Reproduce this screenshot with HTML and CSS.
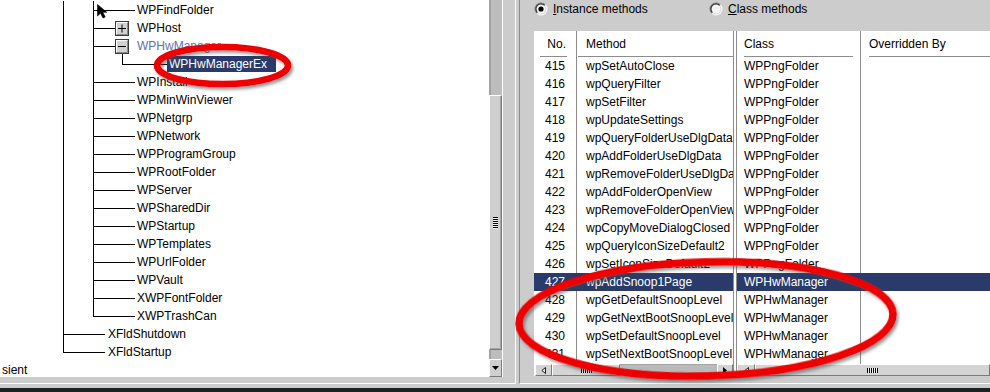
FILE: index.html
```html
<!DOCTYPE html>
<html>
<head>
<meta charset="utf-8">
<link rel="stylesheet" href="styles.css">
</head>
<body>
<div class="screen">
  <div class="window">
    <div class="left">
      <div class="tree-frame">
        <div class="tree">
          <div class="trow r-b">WPFindFolder</div>
          <div class="trow r-bx"><span class="exp"><svg width="14" height="15" viewBox="0 0 14 15"><rect x="0.5" y="0.5" width="13" height="14" fill="#d2d2d2" stroke="#3c3c3c"/><path d="M1.5 13.5V1.5H12.5" stroke="#fff" fill="none"/><path d="M1.5 13.5H12.5V1.5" stroke="#8a8a8a" fill="none"/><path d="M3 7.5H11M7 3.5V11.5" stroke="#000"/></svg></span><span class="tlabel">WPHost</span></div>
          <div class="trow r-bo"><span class="exp"><svg width="14" height="15" viewBox="0 0 14 15"><rect x="0.5" y="0.5" width="13" height="14" fill="#d2d2d2" stroke="#3c3c3c"/><path d="M1.5 13.5V1.5H12.5" stroke="#fff" fill="none"/><path d="M1.5 13.5H12.5V1.5" stroke="#8a8a8a" fill="none"/><path d="M3 7.5H11" stroke="#000"/></svg></span><span class="tlabel hl">WPHwManager</span></div>
          <div class="trow r-c"><span class="tsel">WPHwManagerEx</span></div>
          <div class="trow r-b">WPInstall</div>
          <div class="trow r-b">WPMinWinViewer</div>
          <div class="trow r-b">WPNetgrp</div>
          <div class="trow r-b">WPNetwork</div>
          <div class="trow r-b">WPProgramGroup</div>
          <div class="trow r-b">WPRootFolder</div>
          <div class="trow r-b">WPServer</div>
          <div class="trow r-b">WPSharedDir</div>
          <div class="trow r-b">WPStartup</div>
          <div class="trow r-b">WPTemplates</div>
          <div class="trow r-b">WPUrlFolder</div>
          <div class="trow r-b">WPVault</div>
          <div class="trow r-b">XWPFontFolder</div>
          <div class="trow r-bl">XWPTrashCan</div>
          <div class="trow r-a">XFldShutdown</div>
          <div class="trow r-al">XFldStartup</div>
          <div class="trow r-0">sient</div>
        </div>
        <div class="vscroll">
          <div class="vs-top"></div>
          <div class="vs-thumb"><span class="vs-grip"></span></div>
          <div class="vs-gap"></div>
          <div class="vs-btn"><svg width="7" height="4" viewBox="0 0 7 4"><path d="M0 0H7L3.5 4Z" fill="#000"/></svg></div>
        </div>
      </div>
    </div>

    <div class="right">
      <div class="radios">
        <div class="radio radio-inst">
          <svg width="14" height="14" viewBox="0 0 14 14">
            <defs>
              <linearGradient id="rg1" x1="0" y1="0" x2="1" y2="1"><stop offset="0.48" stop-color="#7a7a7a"/><stop offset="0.52" stop-color="#ffffff"/></linearGradient>
              <linearGradient id="rg2" x1="0" y1="0" x2="1" y2="1"><stop offset="0.48" stop-color="#2c2c2c"/><stop offset="0.52" stop-color="#d8d8d8"/></linearGradient>
            </defs>
            <circle cx="7" cy="7" r="6.5" fill="url(#rg1)"/>
            <circle cx="7" cy="7" r="5.5" fill="url(#rg2)"/>
            <circle cx="7" cy="7" r="4.5" fill="#f4f4f4"/>
            <circle cx="7" cy="7" r="2.6" fill="#000"/>
          </svg>
          <span><u>I</u>nstance methods</span>
        </div>
        <div class="radio">
          <svg width="14" height="14" viewBox="0 0 14 14">
            <circle cx="7" cy="7" r="6.5" fill="url(#rg1)"/>
            <circle cx="7" cy="7" r="5.5" fill="url(#rg2)"/>
            <circle cx="7" cy="7" r="4.5" fill="#f4f4f4"/>
          </svg>
          <span><u>C</u>lass methods</span>
        </div>
      </div>

      <div class="table">
        <div class="split split-l">
          <div class="hd">
            <div class="hc h-no"><span>No.</span></div>
            <div class="hc h-meth"><span>Method</span></div>
          </div>
          <div class="rows">
            <div class="row"><div class="c-no">415</div><div class="c-meth">wpSetAutoClose</div></div>
            <div class="row"><div class="c-no">416</div><div class="c-meth">wpQueryFilter</div></div>
            <div class="row"><div class="c-no">417</div><div class="c-meth">wpSetFilter</div></div>
            <div class="row"><div class="c-no">418</div><div class="c-meth">wpUpdateSettings</div></div>
            <div class="row"><div class="c-no">419</div><div class="c-meth">wpQueryFolderUseDlgData</div></div>
            <div class="row"><div class="c-no">420</div><div class="c-meth">wpAddFolderUseDlgData</div></div>
            <div class="row"><div class="c-no">421</div><div class="c-meth">wpRemoveFolderUseDlgData</div></div>
            <div class="row"><div class="c-no">422</div><div class="c-meth">wpAddFolderOpenView</div></div>
            <div class="row"><div class="c-no">423</div><div class="c-meth">wpRemoveFolderOpenView</div></div>
            <div class="row"><div class="c-no">424</div><div class="c-meth">wpCopyMoveDialogClosed</div></div>
            <div class="row"><div class="c-no">425</div><div class="c-meth">wpQueryIconSizeDefault2</div></div>
            <div class="row"><div class="c-no">426</div><div class="c-meth">wpSetIconSizeDefault2</div></div>
            <div class="row sel"><div class="c-no">427</div><div class="c-meth">wpAddSnoop1Page</div></div>
            <div class="row"><div class="c-no">428</div><div class="c-meth">wpGetDefaultSnoopLevel</div></div>
            <div class="row"><div class="c-no">429</div><div class="c-meth">wpGetNextBootSnoopLevel</div></div>
            <div class="row"><div class="c-no">430</div><div class="c-meth">wpSetDefaultSnoopLevel</div></div>
            <div class="row"><div class="c-no">431</div><div class="c-meth">wpSetNextBootSnoopLevel</div></div>
          </div>
          <div class="hscroll">
            <div class="hs-btn w17"><svg width="5" height="7" viewBox="0 0 5 7"><path d="M4.5 0.5L0.8 3.5L4.5 6.5Z" fill="#e6e6e6" stroke="#222"/></svg></div>
            <div class="hs-thumb"><span class="hs-grip"></span></div>
            <div class="hs-track"></div>
            <div class="hs-btn w16"><svg width="4" height="7" viewBox="0 0 4 7"><path d="M0 0L4 3.5L0 7Z" fill="#000"/></svg></div>
          </div>
        </div>
        <div class="splitbar"></div>
        <div class="split split-r">
          <div class="hd">
            <div class="hc h-cls"><span>Class</span></div>
            <div class="hc h-ovr"><span>Overridden By</span></div>
          </div>
          <div class="rows">
            <div class="row"><div class="c-cls">WPPngFolder</div><div class="c-ovr"></div></div>
            <div class="row"><div class="c-cls">WPPngFolder</div><div class="c-ovr"></div></div>
            <div class="row"><div class="c-cls">WPPngFolder</div><div class="c-ovr"></div></div>
            <div class="row"><div class="c-cls">WPPngFolder</div><div class="c-ovr"></div></div>
            <div class="row"><div class="c-cls">WPPngFolder</div><div class="c-ovr"></div></div>
            <div class="row"><div class="c-cls">WPPngFolder</div><div class="c-ovr"></div></div>
            <div class="row"><div class="c-cls">WPPngFolder</div><div class="c-ovr"></div></div>
            <div class="row"><div class="c-cls">WPPngFolder</div><div class="c-ovr"></div></div>
            <div class="row"><div class="c-cls">WPPngFolder</div><div class="c-ovr"></div></div>
            <div class="row"><div class="c-cls">WPPngFolder</div><div class="c-ovr"></div></div>
            <div class="row"><div class="c-cls">WPPngFolder</div><div class="c-ovr"></div></div>
            <div class="row"><div class="c-cls">WPPngFolder</div><div class="c-ovr"></div></div>
            <div class="row sel"><div class="c-cls">WPHwManager</div><div class="c-ovr"></div></div>
            <div class="row"><div class="c-cls">WPHwManager</div><div class="c-ovr"></div></div>
            <div class="row"><div class="c-cls">WPHwManager</div><div class="c-ovr"></div></div>
            <div class="row"><div class="c-cls">WPHwManager</div><div class="c-ovr"></div></div>
            <div class="row"><div class="c-cls">WPHwManager</div><div class="c-ovr"></div></div>
          </div>
          <div class="hscroll">
            <div class="hs-btn w18"><svg width="5" height="7" viewBox="0 0 5 7"><path d="M4.5 0.5L0.8 3.5L4.5 6.5Z" fill="#e6e6e6" stroke="#222"/></svg></div>
            <div class="hs-thumb fill"><span class="hs-grip"></span></div>
          </div>
        </div>
      </div>
    </div>
  </div>
  <div class="taskbar"></div>
</div>

<svg class="cursor" width="12" height="15" viewBox="0 0 12 15"><path d="M0.5 0.5V12L3.5 9.2L6 14L8.2 13L5.8 8.3H9.8Z" fill="#000" stroke="#000" stroke-width="0.6" stroke-linejoin="round"/></svg>

<svg class="annot" width="990" height="392" viewBox="0 0 990 392">
  <defs>
    <filter id="sh" x="-10%" y="-40%" width="125%" height="190%">
      <feDropShadow dx="2" dy="2.5" stdDeviation="1.5" flood-color="#444" flood-opacity="0.55"/>
    </filter>
  </defs>
  <g fill="none" stroke="#ee0000" filter="url(#sh)">
    <ellipse cx="222.5" cy="65.5" rx="65.5" ry="18.5" stroke-width="6.5"/>
    <ellipse cx="706" cy="319" rx="187" ry="57" stroke-width="7.5" transform="rotate(-1.5 706 319)"/>
  </g>
</svg>
</body>
</html>
```

FILE: styles.css
```css
:root {
  --k: linear-gradient(#000, #000);
  --gray: #cccccc;
  --line: #8c8c8c;
  --sel: #2a3a6b;
}

body {
  margin: 0;
  width: 990px;
  height: 392px;
  overflow: hidden;
  background: var(--gray);
  font-family: "Liberation Sans", Arial, sans-serif;
  font-size: 12px;
  color: #000;
  position: relative;
}

.screen {
  display: flex;
  flex-direction: column;
  height: 392px;
}

.window {
  display: flex;
  align-items: flex-start;
  height: 388px;
}

/* ---------- left pane (tree) ---------- */
.left {
  flex: none;
  width: 516px;
  height: 384px;
  box-sizing: border-box;
  border-right: 1px solid #fff;
  border-bottom: 1px solid #fff;
}

.tree-frame {
  display: flex;
  width: 503px;
  height: 377px;
  box-sizing: border-box;
  border-right: 1px solid #fff;
}

.tree {
  width: 489px;
  height: 377px;
  padding-top: 1px;
  box-sizing: border-box;
  background: #fff;
  overflow: hidden;
  flex: none;
}

.trow {
  height: 18px;
  line-height: 18px;
  display: flex;
  align-items: center;
  white-space: nowrap;
  box-sizing: border-box;
}

.r-b {
  padding-left: 137px;
  background:
    var(--k) 63px 0 / 1px 18px no-repeat,
    var(--k) 93px 0 / 1px 18px no-repeat,
    var(--k) 93px 9px / 42px 1px no-repeat;
}

.r-b:first-child {
  background:
    var(--k) 63px 0 / 1px 18px no-repeat,
    var(--k) 93px 0 / 1px 18px no-repeat,
    var(--k) 93px 9px / 42px 1px no-repeat,
    var(--k) 63px -1px / 31px 1px no-repeat;
}

.r-bx {
  padding-left: 115px;
  background:
    var(--k) 63px 0 / 1px 18px no-repeat,
    var(--k) 93px 0 / 1px 18px no-repeat,
    var(--k) 93px 9px / 22px 1px no-repeat;
}

.r-bo {
  padding-left: 115px;
  background:
    var(--k) 63px 0 / 1px 18px no-repeat,
    var(--k) 93px 0 / 1px 18px no-repeat,
    var(--k) 93px 9px / 22px 1px no-repeat,
    var(--k) 122px 16px / 1px 2px no-repeat;
}

.r-c {
  padding-left: 167px;
  background:
    var(--k) 63px 0 / 1px 18px no-repeat,
    var(--k) 93px 0 / 1px 18px no-repeat,
    var(--k) 122px 0 / 1px 10px no-repeat,
    var(--k) 122px 9px / 45px 1px no-repeat;
}

.r-bl {
  padding-left: 137px;
  background:
    var(--k) 63px 0 / 1px 18px no-repeat,
    var(--k) 93px 0 / 1px 10px no-repeat,
    var(--k) 93px 9px / 42px 1px no-repeat;
}

.r-a {
  padding-left: 108px;
  background:
    var(--k) 63px 0 / 1px 18px no-repeat,
    var(--k) 63px 9px / 42px 1px no-repeat;
}

.r-al {
  padding-left: 108px;
  background:
    var(--k) 63px 0 / 1px 10px no-repeat,
    var(--k) 63px 9px / 42px 1px no-repeat;
}

.r-0 {
  padding-left: 2px;
}

.exp {
  display: block;
  flex: none;
  width: 14px;
  height: 15px;
}

.exp svg {
  display: block;
}

.tlabel {
  margin-left: 8px;
}

.tlabel.hl {
  color: #6071b3;
}

.tsel {
  background: var(--sel);
  color: #fff;
  height: 16px;
  line-height: 16px;
  padding: 0 9px 0 2px;
}

/* vertical scrollbar */
.vscroll {
  flex: none;
  width: 13px;
  display: flex;
  flex-direction: column;
  background: #bdbdbd;
}

.vs-top {
  height: 95px;
  flex: none;
  border-left: 2px solid #a2a2a2;
}

.vs-thumb {
  height: 255px;
  flex: none;
  box-sizing: border-box;
  background: #cfcfcf;
  border: 1px solid;
  border-color: #fff #7a7a7a #7a7a7a #fff;
  box-shadow: inset -1px -1px #a6a6a6;
  display: flex;
  align-items: center;
  justify-content: center;
}

.vs-grip {
  width: 5px;
  height: 12px;
  background: repeating-linear-gradient(#000 0 1px, #f2f2f2 1px 2px);
}

.vs-gap {
  flex: 1;
  border-left: 2px solid #a2a2a2;
}

.vs-btn {
  height: 18px;
  flex: none;
  box-sizing: border-box;
  background: #cfcfcf;
  border: 1px solid;
  border-color: #fff #7a7a7a #7a7a7a #fff;
  display: flex;
  align-items: center;
  justify-content: center;
}

.vs-btn svg {
  display: block;
}

/* ---------- right pane ---------- */
.right {
  flex: 1;
  min-width: 0;
  height: 384px;
  margin-left: 3px;
  box-sizing: border-box;
  border-left: 1px solid var(--line);
  border-bottom: 1px solid #fff;
  padding-left: 14px;
  overflow: hidden;
}

.radios {
  display: flex;
  height: 31px;
  padding-top: 2px;
  box-sizing: border-box;
}

.radio {
  display: flex;
  align-items: center;
  gap: 5px;
  height: 14px;
  line-height: 14px;
}

.radio svg {
  flex: none;
  display: block;
}

.radio-inst {
  width: 175px;
}

.table {
  display: flex;
  height: 345px;
  background: #fff;
}

.split {
  display: flex;
  flex-direction: column;
  min-width: 0;
}

.split-l {
  width: 199px;
  flex: none;
}

.split-r {
  flex: 1;
}

.splitbar {
  flex: none;
  width: 4px;
  box-sizing: border-box;
  border-left: 1px solid var(--line);
  border-right: 1px solid var(--line);
  background: #fff;
}

.hd {
  display: flex;
  height: 26px;
  flex: none;
}

.rows {
  flex: 1;
  overflow: hidden;
}

.split-l .hd,
.split-l .rows {
  background: linear-gradient(var(--line), var(--line)) 42px 0 / 1px 100% no-repeat;
}

.split-r .hd,
.split-r .rows {
  background: linear-gradient(var(--line), var(--line)) 123px 0 / 1px 100% no-repeat;
}

.hc {
  flex: none;
  box-sizing: border-box;
  min-width: 0;
}

.hc span {
  display: block;
  height: 26px;
  box-sizing: border-box;
  padding-top: 2px;
  line-height: 23px;
  border-bottom: 1px solid var(--line);
  white-space: nowrap;
}

.h-no {
  width: 43px;
}

.h-no span {
  margin: 0 10px 0 6px;
  padding-right: 1px;
  text-align: right;
}

.h-meth {
  flex: 1;
}

.h-meth span {
  margin-left: 1px;
  padding-left: 8px;
}

.h-cls {
  width: 124px;
}

.h-cls span {
  margin: 0 8px 0 7px;
}

.h-ovr {
  flex: 1;
}

.h-ovr span {
  margin-left: 8px;
}

.row {
  display: flex;
  height: 18px;
  line-height: 18px;
  white-space: nowrap;
}

.row.sel {
  background: var(--sel);
  color: #fff;
}

.c-no {
  width: 43px;
  flex: none;
  box-sizing: border-box;
  text-align: right;
  padding-right: 12px;
}

.c-meth {
  flex: 1;
  min-width: 0;
  overflow: hidden;
  padding-left: 9px;
}

.c-cls {
  width: 124px;
  flex: none;
  box-sizing: border-box;
  padding-left: 7px;
  overflow: hidden;
}

.c-ovr {
  flex: 1;
  padding-left: 8px;
}

/* horizontal scrollbars */
.hscroll {
  display: flex;
  height: 12px;
  flex: none;
  background: #bababa;
}

.split-l .hscroll {
  margin-left: 1px;
}

.hs-btn,
.hs-thumb {
  box-sizing: border-box;
  background: #d4d4d4;
  border: 1px solid;
  border-color: #fff #7a7a7a #7a7a7a #fff;
  display: flex;
  align-items: center;
  justify-content: center;
  flex: none;
}

.hs-btn svg {
  display: block;
}

.w16 { width: 16px; }
.w17 { width: 17px; }
.w18 { width: 18px; }

.hs-thumb {
  width: 68px;
}

.hs-thumb.fill {
  flex: 1;
  width: auto;
}

.hs-track {
  flex: 1;
  border-top: 1px solid #a4a4a4;
}

.hs-grip {
  width: 11px;
  height: 5px;
  background: repeating-linear-gradient(90deg, #000 0 1px, #f2f2f2 1px 2px);
}

.taskbar {
  height: 4px;
  background: #1c2222;
}

/* overlays */
.cursor {
  position: absolute;
  left: 97px;
  top: 4px;
}

.annot {
  position: absolute;
  left: 0;
  top: 0;
  pointer-events: none;
}
```
